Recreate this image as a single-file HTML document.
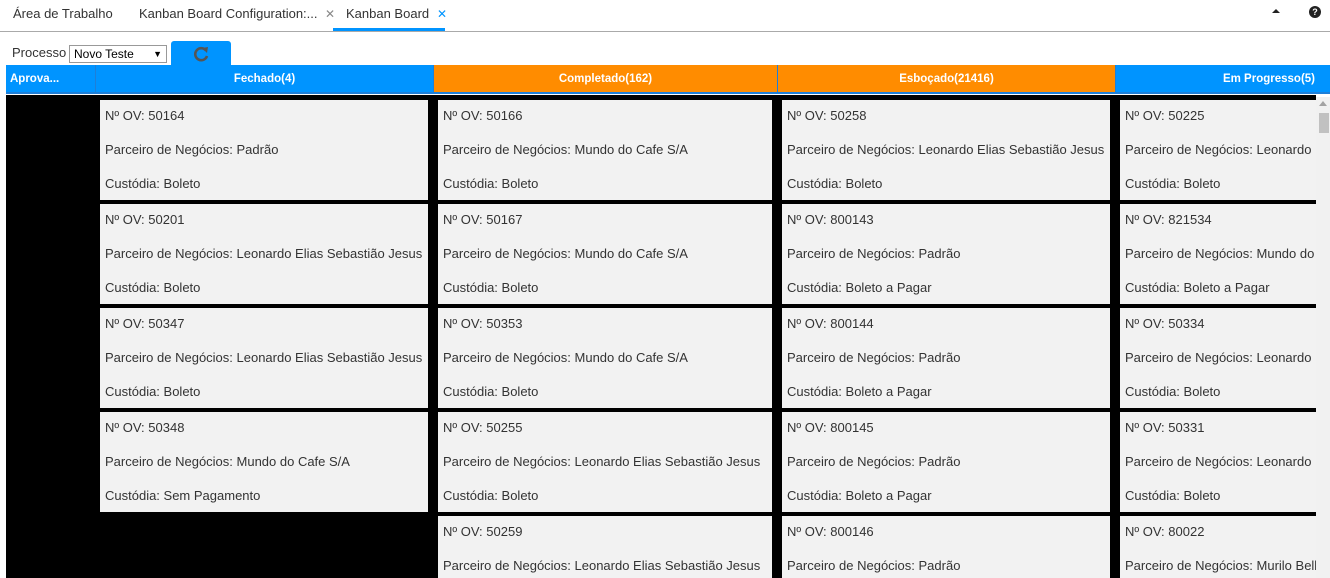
<!DOCTYPE html><html style="overflow:hidden;height:578px"><head><style>
body{margin:0;width:1330px;height:578px;overflow:hidden;background:#fff;font-family:"Liberation Sans",Arial,sans-serif;position:relative}
.a{position:absolute}
.tab{position:absolute;top:6px;font-size:13px;color:#333;white-space:nowrap}
.x{color:#888;font-size:12px}
.h{position:absolute;top:65px;height:29px;line-height:29px;color:#fff;font-weight:bold;font-size:11.5px;text-align:center;border-bottom:2px solid #1e7fd8}
.c{position:absolute;width:var(--w);height:100px;background:#f2f2f2;font-size:13px;color:#333;overflow:hidden;white-space:nowrap}
.c div{position:absolute;left:5px}
</style></head><body>
<div class="tab" style="left:13px">Área de Trabalho</div>
<div class="tab" style="left:139px">Kanban Board Configuration:...</div>
<div class="tab x" style="left:325px;top:7px">✕</div>
<div class="tab" style="left:346px">Kanban Board</div>
<div class="tab x" style="left:437px;top:7px;color:#0094ff">✕</div>
<div class="a" style="left:333px;top:28px;width:112px;height:3px;background:#0094ff"></div>
<div class="a" style="left:0;top:31px;width:1330px;height:1px;background:#aaa"></div>
<div class="a" style="left:1272px;top:9px;width:0;height:0;border-left:4px solid transparent;border-right:4px solid transparent;border-bottom:4px solid #222"></div>
<div class="a" style="left:1309px;top:6px;width:12px;height:12px;border-radius:50%;background:#222;color:#fff;font-size:9px;font-weight:bold;text-align:center;line-height:12px">?</div>
<div class="a" style="left:12px;top:45px;font-size:13px;color:#333">Processo</div>
<div class="a" style="left:69px;top:45px;width:96px;height:16px;border:1px solid #999;font-size:12px;line-height:16px;color:#000;box-sizing:content-box"><span style="margin-left:4px">Novo Teste</span><span style="position:absolute;right:4px;font-size:9px">▼</span></div>
<div class="a" style="left:171px;top:41px;width:60px;height:24px;background:#0094ff;border-radius:3px 3px 0 0"></div>
<svg class="a" style="left:192px;top:45px" width="18" height="18" viewBox="0 0 18 18"><path d="M14 5.5A6 6 0 1 0 15 11" fill="none" stroke="#555" stroke-width="2.6"/><path d="M10 3l6 -1l-1 6z" fill="#555"/></svg>
<div class="a" style="left:6px;top:95px;width:1310px;height:483px;background:#000"></div>
<div class="h" style="left:6px;width:89px;background:#0094ff;text-align:left;padding-left:4px;box-sizing:border-box">Aprova...</div>
<div class="h" style="left:95px;width:338px;background:#0094ff;border-left:1px solid #1e7fd8;box-sizing:border-box">Fechado(4)</div>
<div class="h" style="left:433px;width:344px;background:#ff8c00;border-left:1px solid #1e7fd8;box-sizing:border-box">Completado(162)</div>
<div class="h" style="left:777px;width:338px;background:#ff8c00;border-left:1px solid #1e7fd8;box-sizing:border-box">Esboçado(21416)</div>
<div class="h" style="left:1115px;width:215px;background:#0094ff;border-left:1px solid #1e7fd8;box-sizing:border-box;text-align:right;padding-right:15px">Em Progresso(5)</div>
<div class="a" style="left:1316px;top:97px;width:14px;height:481px;background:#f1f1f1"></div>
<div class="a" style="left:1319px;top:113px;width:10px;height:20px;background:#c1c1c1"></div>
<div class="a" style="left:1319px;top:101px;width:0;height:0;border-left:4px solid transparent;border-right:4px solid transparent;border-bottom:5px solid #a3a3a3"></div>
<div class="a" id="cards" style="left:0;top:0;width:1330px;height:578px;overflow:hidden"></div>
<script>
var cols=[[100,328,[["50164","Padrão","Boleto"],["50201","Leonardo Elias Sebastião Jesus","Boleto"],["50347","Leonardo Elias Sebastião Jesus","Boleto"],["50348","Mundo do Cafe S/A","Sem Pagamento"]]],
[438,334,[["50166","Mundo do Cafe S/A","Boleto"],["50167","Mundo do Cafe S/A","Boleto"],["50353","Mundo do Cafe S/A","Boleto"],["50255","Leonardo Elias Sebastião Jesus","Boleto"],["50259","Leonardo Elias Sebastião Jesus","Boleto"]]],
[782,328,[["50258","Leonardo Elias Sebastião Jesus","Boleto"],["800143","Padrão","Boleto a Pagar"],["800144","Padrão","Boleto a Pagar"],["800145","Padrão","Boleto a Pagar"],["800146","Padrão","Boleto a Pagar"]]],
[1120,196,[["50225","Leonardo Elias Sebastião Jesus","Boleto"],["821534","Mundo do Cafe S/A","Boleto a Pagar"],["50334","Leonardo Elias Sebastião Jesus","Boleto"],["50331","Leonardo Elias Sebastião Jesus","Boleto"],["80022","Murilo Bell","Boleto"]]]];
var h="";cols.forEach(function(c){c[2].forEach(function(d,i){h+='<div class="c" style="left:'+c[0]+'px;top:'+(100+i*104)+'px;width:'+c[1]+'px"><div style="top:8px">Nº OV: '+d[0]+'</div><div style="top:42px">Parceiro de Negócios: '+d[1]+'</div><div style="top:76px">Custódia: '+d[2]+'</div></div>';});});
document.getElementById("cards").innerHTML=h;
</script>
</body></html>
